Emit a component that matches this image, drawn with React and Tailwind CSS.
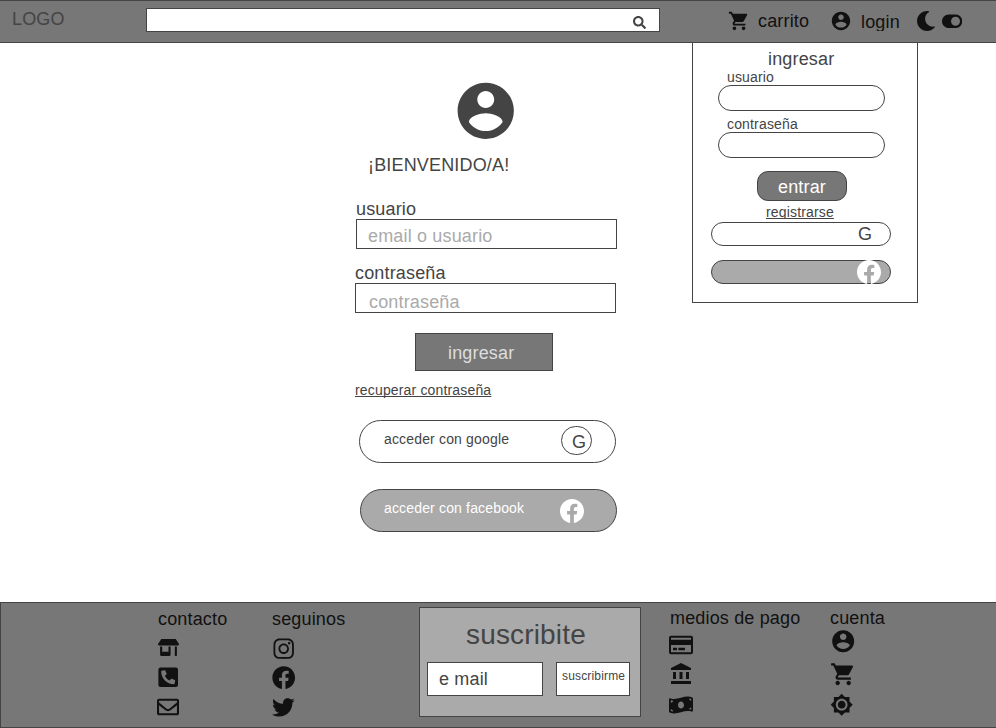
import {
  FaFacebook,
  FaInstagram,
  FaMoneyBillWave,
  FaMoon,
  FaPhoneSquareAlt,
  FaRegCreditCard,
  FaRegEnvelope,
  FaSearch,
  FaStoreAlt,
  FaToggleOn,
  FaTwitter,
} from 'react-icons/fa';
import { MdAccountBalance, MdBrightnessHigh, MdShoppingCart } from 'react-icons/md';
import { BsFacebook } from 'react-icons/bs';

function AccountIcon({ className }) {
  return (
    <svg viewBox="0 0 24 24" fill="currentColor" className={className}>
      <path d="M12 2C6.48 2 2 6.48 2 12s4.48 10 10 10 10-4.48 10-10S17.52 2 12 2zm0 3c1.66 0 3 1.34 3 3s-1.34 3-3 3-3-1.34-3-3 1.34-3 3-3zm0 14.2c-2.5 0-4.71-1.28-6-3.22.03-1.99 4-3.08 6-3.08 1.99 0 5.97 1.09 6 3.08-1.29 1.94-3.5 3.22-6 3.22z" />
    </svg>
  );
}

function Navbar() {
  return (
    <header className="flex h-[43px] items-start border-y border-[#444] bg-[#777] text-[#111]">
      <span className="mt-2 ml-3 w-[134px] text-[#444]">LOGO</span>
      <div className="mt-[7px] flex h-6 w-[514px] justify-end border border-[#444] bg-white pt-[7px] pr-[13px] text-[#444]">
        <FaSearch className="size-[13px]" />
      </div>
      <MdShoppingCart className="mt-[9px] ml-[68px] size-[22px]" />
      <span className="mt-[10px] ml-2 w-[72px]">carrito</span>
      <AccountIcon className="mt-[9px] size-[22px]" />
      <span className="mt-[11px] ml-[9px] h-[19px] w-[55px] overflow-hidden">login</span>
      <FaMoon className="mt-[10px] size-5" />
      <FaToggleOn className="mt-[10px] ml-[5.8px] size-[20.3px]" />
    </header>
  );
}

function LoginDropdown() {
  return (
    <aside className="absolute top-[42px] left-[692px] flex h-[261px] w-[226px] flex-col items-start border border-[#444] bg-white">
      <h2 className="mt-[6px] ml-[75px]">ingresar</h2>
      <label className="ml-[34px] text-[14px] leading-4">usuario</label>
      <div className="ml-[25px] h-[26px] w-[167px] rounded-full border border-[#444]" />
      <label className="mt-[5px] ml-[34px] text-[14px] leading-4">contraseña</label>
      <div className="ml-[25px] h-[26px] w-[167px] rounded-full border border-[#444]" />
      <button className="mt-[13px] ml-16 flex h-[30px] w-[90px] rounded-[11px] border border-[#444] bg-[#777] pt-[5px] pl-[20px] text-white">
        entrar
      </button>
      <a className="mt-[3px] ml-[73px] h-[15px] overflow-hidden text-[14px] leading-4 underline [text-decoration-skip-ink:none]">
        registrarse
      </a>
      <div className="mt-[3px] ml-[18px] h-6 w-[180px] rounded-full border border-[#444] pt-px pl-[146px]">G</div>
      <div className="mt-[14px] ml-[18px] h-6 w-[180px] rounded-full border border-[#444] bg-[#aaa] pl-[145px]">
        <BsFacebook className="-mt-px size-6 text-white" />
      </div>
    </aside>
  );
}

function LoginForm() {
  return (
    <main className="flex h-[559px] flex-col items-start pl-[355px]">
      <AccountIcon className="mt-[33.5px] ml-[96.7px] size-[67.5px]" />
      <h1 className="mt-[11px] ml-[13px]">¡BIENVENIDO/A!</h1>
      <label className="mt-6 ml-px">usuario</label>
      <div className="ml-px h-[30px] w-[261px] border border-[#444] pt-[6px] pl-[11px] text-[#aaa]">email o usuario</div>
      <label className="mt-[14px]">contraseña</label>
      <div className="h-[30px] w-[261px] border border-[#444] pt-2 pl-[13px] text-[#aaa]">contraseña</div>
      <button className="mt-5 ml-[60px] flex h-[38px] w-[138px] border border-[#444] bg-[#777] pt-[9px] pl-8 text-[#ddd]">
        ingresar
      </button>
      <a className="mt-[11px] text-[14px] leading-4 underline [text-decoration-skip-ink:none]">recuperar contraseña</a>
      <button className="mt-[22px] ml-1 flex h-[43px] w-[257px] rounded-full border border-[#444] pl-6 text-[14px] leading-4">
        <span className="mt-[10px] w-[177px] text-left">acceder con google</span>
        <span className="mt-[5px] flex h-[29px] w-[31px] rounded-full border border-[#444] pt-[5px] pl-[10px] text-[18px] leading-5">
          G
        </span>
      </button>
      <button className="mt-[26px] ml-[5px] flex h-[43px] w-[257px] rounded-full border border-[#444] bg-[#aaa] pl-[23px] text-[14px] leading-4 text-white">
        <span className="mt-[10px] w-44 text-left">acceder con facebook</span>
        <BsFacebook className="mt-[9px] size-6" />
      </button>
    </main>
  );
}

function Footer() {
  return (
    <footer className="flex h-[126px] items-start border-y border-l border-[#444] bg-[#777] text-[#111]">
      <section className="ml-[156px] flex w-[115px] flex-col items-start pt-[6px]">
        <h3 className="ml-px">contacto</h3>
        <FaStoreAlt className="mt-2 ml-px size-[21px]" />
        <FaPhoneSquareAlt className="mt-[8px] ml-[-0.2px] size-[22.4px]" />
        <FaRegEnvelope className="mt-[7.6px] size-[22px]" />
      </section>
      <section className="flex w-[147px] flex-col items-start pt-[6px]">
        <h3>seguinos</h3>
        <FaInstagram className="mt-[7.8px] ml-[-0.4px] size-[23.4px]" />
        <FaFacebook className="mt-[5.4px] ml-[-0.3px] size-[23.4px]" />
        <FaTwitter className="mt-[6.7px] ml-[0.3px] size-[22.7px]" />
      </section>
      <section className="mt-1 h-[110px] w-[222px] border border-[#444] bg-[#aaa] pt-[11px] text-[#444]">
        <h2 className="ml-[46px] text-[28px] leading-[31px]">suscribite</h2>
        <div className="mt-3 ml-[7px] flex gap-[13px]">
          <div className="h-[34px] w-[116px] border border-[#444] bg-white pt-[6px] pl-[11px]">e mail</div>
          <button className="flex h-[34px] w-[74px] border border-[#444] bg-white pt-[6px] pl-[5px] text-[12px] leading-[14px]">
            suscribirme
          </button>
        </div>
      </section>
      <section className="ml-7 flex w-[160px] flex-col items-start pt-[5px]">
        <h3 className="ml-px">medios de pago</h3>
        <FaRegCreditCard className="mt-[4.6px] size-6" />
        <MdAccountBalance className="mt-[5.4px] size-6" />
        <FaMoneyBillWave className="mt-[7px] size-6" />
      </section>
      <section className="flex flex-col items-start pt-[5px]">
        <h3 className="ml-px">cuenta</h3>
        <AccountIcon className="ml-[0.8px] size-[26.4px]" />
        <MdShoppingCart className="mt-[6.6px] ml-[0.8px] size-[26.4px]" />
        <MdBrightnessHigh className="mt-[5.9px] ml-[1.3px] size-[23.4px]" />
      </section>
    </footer>
  );
}

export default function App() {
  return (
    <div className="relative h-[728px] w-[996px] overflow-hidden bg-white font-['Liberation_Sans',Arial,sans-serif] text-[18px] leading-5 tracking-[0.009em] text-[#444]">
      <Navbar />
      <LoginForm />
      <Footer />
      <LoginDropdown />
    </div>
  );
}
